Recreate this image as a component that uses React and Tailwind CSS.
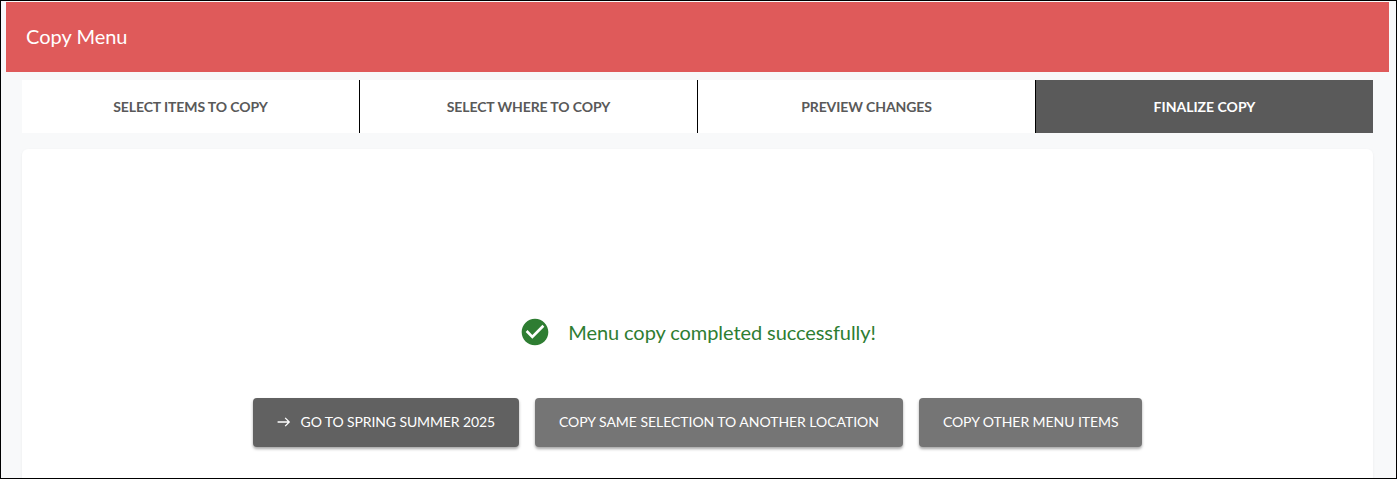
export default function App() {
  const tabs = ["SELECT ITEMS TO COPY", "SELECT WHERE TO COPY", "PREVIEW CHANGES"];
  const btn = "flex h-[49px] items-center rounded px-6 pb-[2px] text-[14px] font-normal text-white shadow-[0_2px_3px_rgba(0,0,0,0.35)]";
  return (
    <div className="h-[479px] w-[1397px] overflow-hidden border border-black bg-[#f8f9fa] font-['Lato',sans-serif]">
      <div className="pl-[5px] pr-[7px] pt-px">
        <div className="flex h-[70px] items-center bg-[#df5a5a] pb-[2px] pl-5 text-[20px] text-white">Copy Menu</div>
      </div>
      <div className="px-[21px] pr-[23px]">
        <div className="mt-2 flex h-[53px]">
          {tabs.map((t) => (
            <div key={t} className="flex w-[338px] items-center justify-center border-r border-black bg-white text-[14px] font-bold tracking-[-0.1px] text-[#595959]">{t}</div>
          ))}
          <div className="flex flex-1 items-center justify-center bg-[#5a5a5a] text-[14px] font-bold text-white">FINALIZE COPY</div>
        </div>
        <div className="mt-4 h-[340px] rounded-t-md bg-white shadow-[0_1px_3px_rgba(0,0,0,0.06)]">
          <div className="flex items-center justify-center pt-[167px]">
            <svg viewBox="0 0 24 24" className="h-[32px] w-[32px] fill-[#2e7d32]">
              <path d="M12 2C6.48 2 2 6.48 2 12s4.48 10 10 10 10-4.48 10-10S17.52 2 12 2zm-2 15-5-5 1.41-1.41L10 14.17l7.59-7.59L19 8l-9 9z" />
            </svg>
            <span className="ml-[17px] text-[20px] tracking-[-0.08px] text-[#2e7d32]">Menu copy completed successfully!</span>
          </div>
          <div className="mt-[50px] flex justify-center gap-4">
            <button className={`${btn} bg-[#616161] tracking-[-0.12px]`}>
              <svg viewBox="0 0 24 24" className="mr-[10px] h-[14px] w-[14px] fill-none stroke-white stroke-[2.2]">
                <path d="M1 12h20M14 5l7 7-7 7" />
              </svg>
              GO TO SPRING SUMMER 2025
            </button>
            <button className={`${btn} bg-[#757575] tracking-[-0.04px]`}>COPY SAME SELECTION TO ANOTHER LOCATION</button>
            <button className={`${btn} bg-[#757575] tracking-[-0.07px]`}>COPY OTHER MENU ITEMS</button>
          </div>
        </div>
      </div>
    </div>
  );
}
